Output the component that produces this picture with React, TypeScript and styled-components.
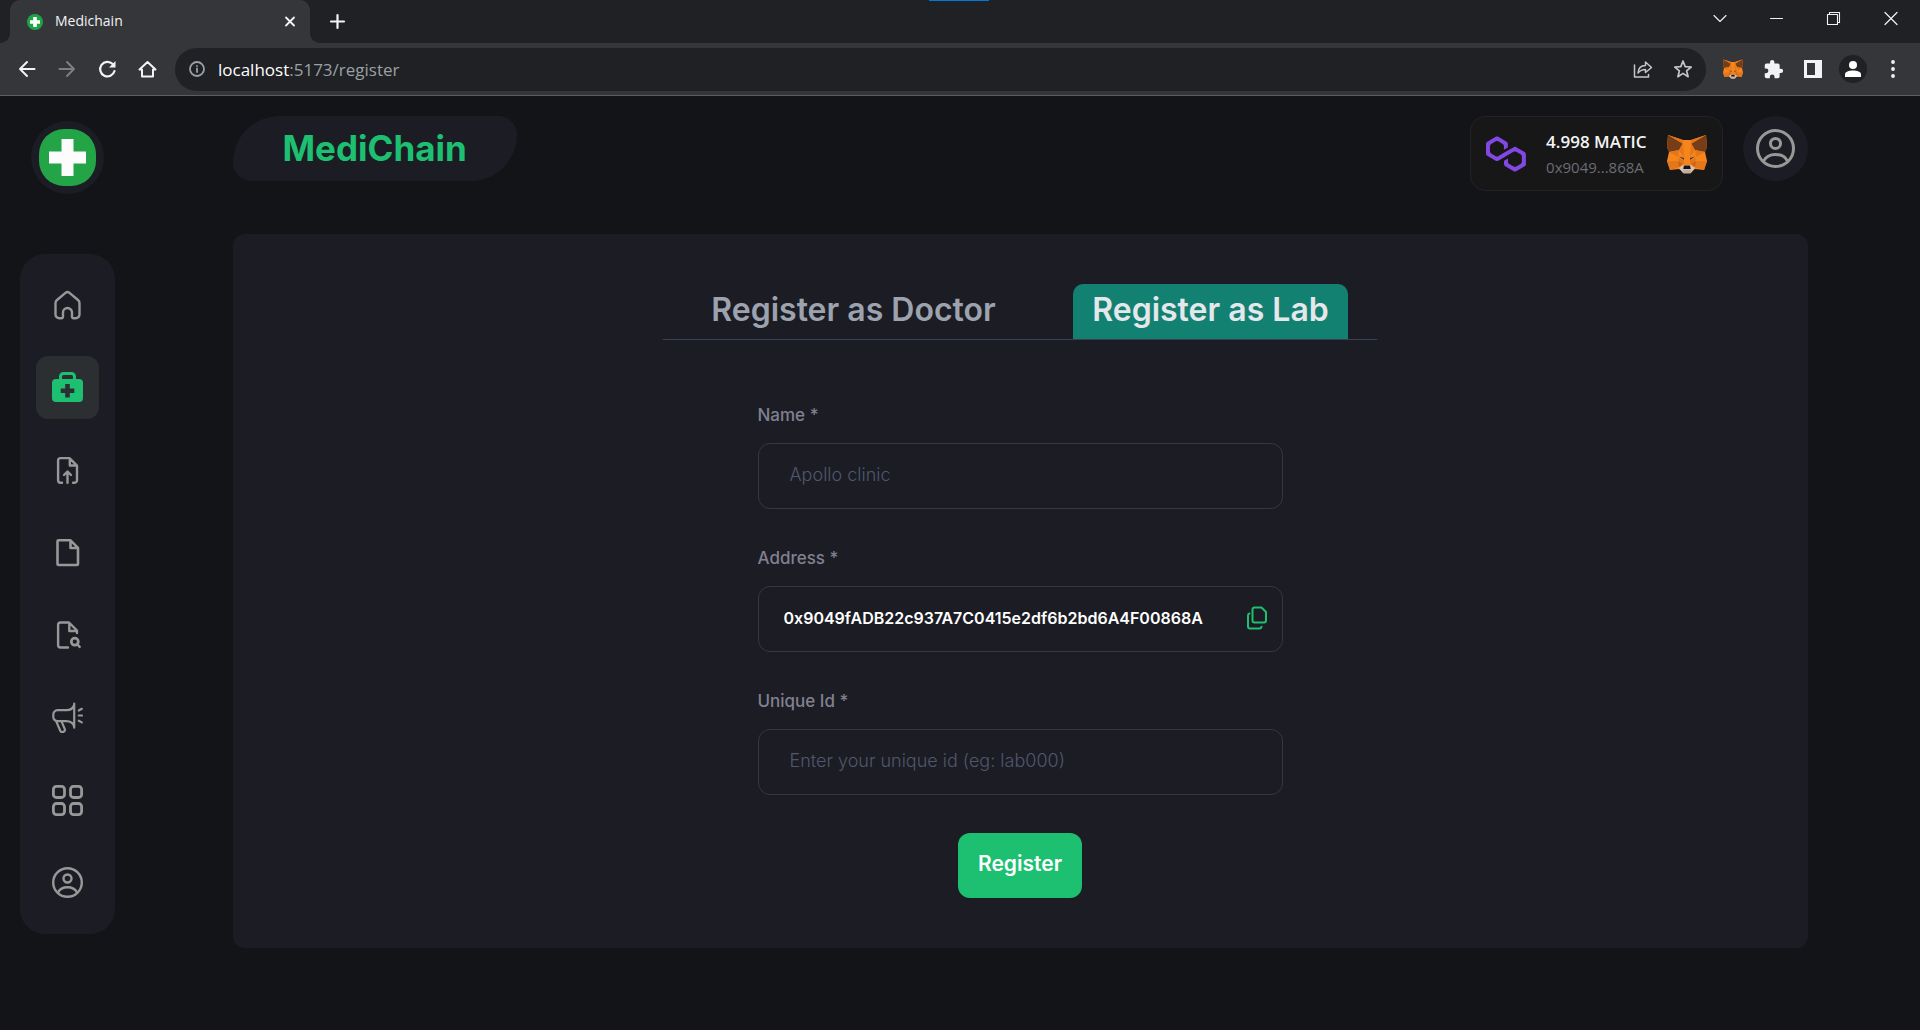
import React, { useState } from "react";
import styled, { createGlobalStyle } from "styled-components";

const UI_FONT = '"Open Sans", "Noto Sans", sans-serif';
const APP_FONT = 'Inter, "Liberation Sans", sans-serif';

const GlobalStyle = createGlobalStyle`
  * { box-sizing: border-box; }
  body {
    margin: 0;
    background: #131418;
    font-family: ${APP_FONT};
  }
  button, input { font: inherit; }
  svg { display: block; flex: none; }
`;

const Window = styled.div`
  min-height: 100vh;
  display: flex;
  flex-direction: column;
`;

/* ---------- browser chrome ---------- */

const TabStrip = styled.div`
  position: relative;
  height: 43px;
  display: flex;
  align-items: stretch;
  padding-left: 10px;
  background: #202124;
  font-family: ${UI_FONT};
`;

const LoadingMark = styled.div`
  position: absolute;
  top: 0;
  left: 929px;
  width: 60px;
  height: 1px;
  background: #0078d7;
`;

const BrowserTab = styled.div`
  position: relative;
  width: 300px;
  display: flex;
  align-items: center;
  gap: 12px;
  padding: 0 12px 0 17px;
  border-radius: 10px 10px 0 0;
  background: #35363a;
  color: #f1f3f4;
  font-size: 14px;

  &::before,
  &::after {
    content: "";
    position: absolute;
    bottom: 0;
    width: 10px;
    height: 10px;
  }
  &::before {
    left: -10px;
    background: radial-gradient(circle at 0 0, #202124 10px, #35363a 10px);
  }
  &::after {
    right: -10px;
    background: radial-gradient(circle at 100% 0, #202124 10px, #35363a 10px);
  }
`;

const TabTitle = styled.span`
  flex: 1;
  padding-bottom: 2px;
`;

const ChromeButton = styled.button<{ $width?: number; $dim?: boolean }>`
  width: ${(p) => p.$width ?? 40}px;
  flex: none;
  display: flex;
  align-items: center;
  justify-content: center;
  padding: 0;
  border: 0;
  background: none;
  color: ${(p) => (p.$dim ? "#7d7e82" : "#f1f3f4")};
`;

const WindowControls = styled.div`
  display: flex;
  margin-left: auto;
  height: 36px;
`;

const Toolbar = styled.div`
  height: 53px;
  display: flex;
  align-items: center;
  padding: 0 7px;
  border-bottom: 1px solid #5c5d62;
  background: #35363a;
  font-family: ${UI_FONT};
`;

const AddressBar = styled.div`
  flex: 1;
  height: 43px;
  display: flex;
  align-items: center;
  margin: 0 7px 0 8px;
  padding: 0 3px 0 14px;
  border-radius: 22px;
  background: #202124;
`;

const Url = styled.div`
  flex: 1;
  padding-left: 13px;
  font-size: 17px;
  color: #9aa0a6;

  b {
    font-weight: 400;
    color: #fff;
  }
`;

const ProfileBadge = styled.span`
  width: 28px;
  height: 28px;
  display: grid;
  place-items: center;
  border-radius: 50%;
  background: #202124;
`;

/* ---------- page ---------- */

const Page = styled.div`
  flex: 1;
  display: flex;
  align-items: flex-start;
  padding: 20px;
`;

const Aside = styled.aside`
  width: 95px;
  flex: none;
  display: flex;
  flex-direction: column;
  align-items: center;
  gap: 60px;
  margin-right: 50px;
  padding-top: 5px;
`;

const LogoLink = styled.a`
  width: 73px;
  height: 73px;
  display: grid;
  place-items: center;
  border-radius: 50%;
  background: #1c1c24;
`;

const Nav = styled.nav`
  width: 100%;
  height: calc(100vh - 350px);
  min-height: 600px;
  display: flex;
  flex-direction: column;
  align-items: center;
  justify-content: space-between;
  padding: 20px 0;
  border-radius: 25px;
  background: #1c1c24;
`;

const NavLink = styled.a<{ $active?: boolean }>`
  width: 63px;
  height: 63px;
  display: grid;
  place-items: center;
  border-radius: 12px;
  background: ${(p) => (p.$active ? "#2c2f32" : "transparent")};
  color: ${(p) => (p.$active ? "#1dc071" : "#989898")};
`;

const Content = styled.div`
  flex: 1;
  max-width: 1600px;
  margin: 0 auto;
  padding-right: 25px;
`;

const Header = styled.header`
  display: flex;
  align-items: flex-start;
  gap: 20px;
  margin-bottom: 43px;
`;

const Brand = styled.h1`
  height: 65px;
  display: flex;
  align-items: center;
  margin: 0 auto 0 0;
  padding: 0 50px 2px;
  border-radius: 50px 20px;
  background: #1c1c24;
  color: #1dc071;
  font-size: 35px;
  font-weight: 700;
`;

const Wallet = styled.div`
  height: 75px;
  display: flex;
  align-items: center;
  gap: 20px;
  padding: 0 15px;
  border: 1px solid #232325;
  border-radius: 15px;
  background: #171717;
  font-family: ${UI_FONT};
`;

const WalletInfo = styled.div`
  display: flex;
  flex-direction: column;
`;

const Balance = styled.span`
  font-size: 17px;
  line-height: 27px;
  font-weight: 600;
  color: #f3f3f3;
`;

const Account = styled.span`
  font-size: 15px;
  line-height: 25px;
  color: #6b6c75;
`;

const Avatar = styled.button`
  width: 65px;
  height: 65px;
  display: grid;
  place-items: center;
  padding: 0;
  border: 0;
  border-radius: 50%;
  background: #1c1c24;
  color: #989898;
`;

const Panel = styled.main`
  display: flex;
  flex-direction: column;
  align-items: center;
  padding: 50px;
  border-radius: 12px;
  background: #1c1c24;
`;

const Tabs = styled.div`
  min-width: 714px;
  display: flex;
  justify-content: space-around;
  border-bottom: 1px solid #374151;
`;

const TabButton = styled.button<{ $active: boolean }>`
  padding: 0 19px 4px;
  border: 0;
  border-radius: 10px 10px 0 0;
  background: ${(p) => (p.$active ? "#128172" : "transparent")};
  color: ${(p) => (p.$active ? "#e5e7eb" : "#9ca3af")};
  font-size: 32px;
  line-height: 51px;
  font-weight: 600;
`;

const Form = styled.form`
  width: 100%;
  max-width: 525px;
  display: flex;
  flex-direction: column;
  gap: 38px;
  margin-top: 64px;
`;

const Field = styled.div`
  display: flex;
  flex-direction: column;
  gap: 17px;
`;

const Label = styled.label`
  font-size: 17px;
  line-height: 22px;
  font-weight: 500;
  color: #808191;
`;

const InputBox = styled.div<{ $inset: number }>`
  height: 66px;
  display: flex;
  align-items: center;
  padding: 0 12px 2px ${(p) => p.$inset}px;
  border: 1px solid #373740;
  border-radius: 12px;
`;

const Input = styled.input`
  flex: 1;
  min-width: 0;
  padding: 0;
  border: 0;
  outline: 0;
  background: none;
  color: #fff;
  font-size: 18px;
  line-height: 26px;

  &:read-only {
    font-size: 16px;
    font-weight: 600;
  }
  &::placeholder {
    color: #4f586c;
    font-weight: 300;
    opacity: 1;
  }
`;

const CopyButton = styled.button`
  display: grid;
  place-items: center;
  padding: 0;
  border: 0;
  background: none;
  color: #1dc071;
`;

const Submit = styled.button`
  align-self: center;
  height: 65px;
  padding: 0 20px 5px;
  border: 0;
  border-radius: 12px;
  background: #1dc071;
  color: #fff;
  font-size: 21px;
  font-weight: 600;
`;

/* ---------- drawings ---------- */

const Line: React.FC<{ size?: number; box?: number; w?: number; children: React.ReactNode }> = ({
  size = 32,
  box = 32,
  w = 2,
  children,
}) => (
  <svg
    width={size}
    height={size}
    viewBox={`0 0 ${box} ${box}`}
    fill="none"
    stroke="currentColor"
    strokeWidth={w}
    strokeLinecap="round"
    strokeLinejoin="round"
    aria-hidden="true"
  >
    {children}
  </svg>
);

const NavGlyph: React.FC<{ size?: number; w?: number; children: React.ReactNode }> = ({
  size = 31,
  w = 2.4,
  children,
}) => (
  <svg
    width={size}
    height={size}
    viewBox="0.5 0.5 31 31"
    fill="none"
    stroke="currentColor"
    strokeWidth={w}
    strokeLinecap="round"
    strokeLinejoin="round"
    aria-hidden="true"
  >
    {children}
  </svg>
);

const HomeIcon = () => (
  <NavGlyph>
    <path d="M4 13.5c0-1.300.5-2.200 1.500-3L14 3.300c1.200-1 2.800-1 4 0l8.500 7.200c1 .8 1.500 1.700 1.500 3V25a3.800 3.800 0 0 1-3.800 3.800H22a1.500 1.500 0 0 1-1.500-1.500V23a4.500 4.500 0 0 0-9 0v4.300a1.500 1.500 0 0 1-1.500 1.500H7.800A3.800 3.800 0 0 1 4 25z" />
  </NavGlyph>
);

const MedKitIcon = () => (
  <NavGlyph w={3}>
    <path d="M9 9V5a3 3 0 0 1 3-3h8a3 3 0 0 1 3 3v4" />
    <rect x=".5" y="7.500" width="31" height="23" rx="4" fill="currentColor" stroke="none" />
    <path d="M16 12.500v13.600M9.200 19.300h13.600" stroke="#2c2f32" strokeWidth="4.600" strokeLinecap="butt" />
  </NavGlyph>
);

const UploadIcon = () => (
  <NavGlyph>
    <path d="M10.500 28.200H9a2.400 2.400 0 0 1-2.400-2.400V6A2.400 2.400 0 0 1 9 3.600h9l7.500 7.500v14.700a2.400 2.400 0 0 1-2.400 2.400h-1.500M18.300 4v7h7M16 28.200V17.500M12.500 20.500L16 17l3.500 3.500" />
  </NavGlyph>
);

const FileIcon = () => (
  <NavGlyph w={2.6}>
    <path d="M7 3.800h12l7.500 7.500V27.500a1 1 0 0 1-1 1H7a1 1 0 0 1-1-1V4.800a1 1 0 0 1 1-1zM19 4.200v7.300h7" />
  </NavGlyph>
);

const FileSearchIcon = () => (
  <NavGlyph>
    <path d="M16.500 28H9a2.400 2.400 0 0 1-2.400-2.400V5.400A2.400 2.400 0 0 1 9 3h8.500l8 8v2.500M17.800 3.500v8h7.500M26 25l2.200 2.400" />
    <circle cx="23.300" cy="22.200" r="3.500" strokeWidth="2.700" />
  </NavGlyph>
);

const MegaphoneIcon = () => (
  <NavGlyph w={2.2}>
    <path d="M22.700 2v24.200M22.700 3c-.8 3.800-3.400 5.700-8 5.700H6A4.200 4.200 0 0 0 1.800 13v2.400A4.200 4.200 0 0 0 6 19.600h8.700c4.600 0 7.200 1.900 8 5.700M4.600 19.600l4.200 9.700a2.400 2.400 0 0 0 4.400-1.900l-3.300-7.800M27.300 9l3-1.700M27.300 14h3.200M27.300 19.200l3 1.700" />
  </NavGlyph>
);

const GridIcon = () => (
  <NavGlyph w={2.8}>
    {[1.9, 19].map((y) =>
      [1.9, 19].map((x) => <rect key={`${x}-${y}`} x={x} y={y} width="11.1" height="11.1" rx="3" />)
    )}
  </NavGlyph>
);

const UserIcon: React.FC<{ size?: number }> = ({ size }) => (
  <NavGlyph size={size}>
    <circle cx="16" cy="16" r="14.300" />
    <circle cx="16" cy="12" r="4" />
    <path d="M6.500 26c1.800-3.700 5.300-5.300 9.500-5.300s7.700 1.600 9.500 5.300" />
  </NavGlyph>
);

const LogoIcon = () => (
  <svg width="57" height="57" viewBox="0 0 57 57" aria-hidden="true">
    <rect width="57" height="57" rx="25" fill="#22a447" />
    <path d="M28.500 10v37M10 28.500h37" stroke="#fcfcfc" strokeWidth="12" />
  </svg>
);

const PolygonIcon = () => (
  <svg width="40" height="36" viewBox="0 0 38.4 33.5" fill="#8247e5" aria-hidden="true">
    <path d="M29 10.2c-.7-.4-1.6-.4-2.4 0L21 13.5l-3.800 2.100-5.500 3.300c-.7.4-1.600.4-2.400 0L5 16.300c-.7-.4-1.200-1.200-1.200-2.100v-5c0-.8.4-1.600 1.200-2.100l4.300-2.500c.7-.4 1.600-.4 2.400 0L16 7.200c.7.4 1.200 1.200 1.200 2.100v3.300l3.800-2.200V7c0-.8-.4-1.600-1.200-2.100l-8-4.700c-.7-.4-1.600-.4-2.400 0L1.200 5C.4 5.400 0 6.200 0 7v9.400c0 .8.4 1.600 1.200 2.100l8.100 4.700c.7.4 1.600.4 2.400 0l5.500-3.200 3.800-2.200 5.500-3.200c.7-.4 1.600-.4 2.400 0l4.300 2.500c.7.4 1.200 1.200 1.200 2.100v5c0 .8-.4 1.600-1.200 2.100L29 28.800c-.7.4-1.600.4-2.400 0l-4.300-2.500c-.7-.4-1.200-1.200-1.200-2.100V21l-3.800 2.200v3.300c0 .8.4 1.600 1.200 2.100l8.100 4.700c.7.4 1.600.4 2.400 0l8.100-4.700c.7-.4 1.200-1.200 1.200-2.100V17c0-.8-.4-1.600-1.200-2.100z" />
  </svg>
);

const FoxIcon: React.FC<{ size?: number }> = ({ size = 40 }) => (
  <svg width={size} height={size} viewBox="0 0 40 40" aria-hidden="true">
    <path d="M1 1l15 5h8l15-5 1 12-2 5 2 9-3 9-9-1-4 3h-8l-4-3-9 1-3-9 2-9-2-5z" fill="#f6851b" />
    <path d="M1 1l15 8-4 7-10 2-2-5zM39 1L24 9l4 7 10 2 2-5z" fill="#763d16" />
    <path d="M1 1l15 5v4zM39 1l-15 5v4z" fill="#e2761b" />
    <path d="M12 16l4-7 1 14zM28 16l-4-7-1 14z" fill="#e4761b" />
    <path d="M2 18l10-2-1 7zM38 18l-10-2 1 7zM11 24l6 2v4l-5-2zM29 24l-6 2v4l5-2z" fill="#e2761b" />
    <path d="M0 27h11l1 6-9 3zM40 27H29l-1 6 9 3z" fill="#e4761b" />
    <path d="M11 27l5 3-4 3zM29 27l-5 3 4 3z" fill="#cd6116" />
    <path d="M12 22.500l5 1.500v1.800zM28 22.500l-5 1.500v1.800z" fill="#233447" />
    <path d="M12 34l4-3h8l4 3-4 5h-8z" fill="#d7c1b3" />
    <path d="M17 31.500h6l.8 3.500h-7.600z" fill="#161616" />
    <path d="M16 36h8l-.5 3.500h-7z" fill="#c0ad9e" />
  </svg>
);

const CopyIcon = () => (
  <Line size={26} box={26} w={2}>
    <path d="M10.500 2.500h7L22 7v8.500a2 2 0 0 1-2 2h-9.500a2 2 0 0 1-2-2v-11a2 2 0 0 1 2-2zM5.500 8.500a2 2 0 0 0-1.500 2v11a2 2 0 0 0 2 2h9.500a2 2 0 0 0 2-1.800" />
  </Line>
);

const Favicon = () => (
  <svg width="16" height="16" viewBox="0 0 16 16" aria-hidden="true">
    <circle cx="8" cy="8" r="8" fill="#1fa347" />
    <path d="M8 3v10M3 8h10" stroke="#fff" strokeWidth="3.600" />
  </svg>
);

const NAV_ITEMS = [
  { name: "Home", Icon: HomeIcon },
  { name: "Register", Icon: MedKitIcon, active: true },
  { name: "Upload", Icon: UploadIcon },
  { name: "Files", Icon: FileIcon },
  { name: "Search files", Icon: FileSearchIcon },
  { name: "Campaign", Icon: MegaphoneIcon },
  { name: "Dashboard", Icon: GridIcon },
  { name: "Profile", Icon: UserIcon },
];

const BrowserChrome = () => (
  <>
    <TabStrip>
      <LoadingMark />
      <BrowserTab>
        <Favicon />
        <TabTitle>Medichain</TabTitle>
        <ChromeButton $width={16} aria-label="Close tab">
          <Line size={16} box={16} w={1.8}><path d="M4 3.500l8 8M12 3.500l-8 8" /></Line>
        </ChromeButton>
      </BrowserTab>
      <ChromeButton $width={54} aria-label="New tab">
        <Line size={18} box={18} w={2.2}><path d="M9.500 2v13M3 8.500h13" /></Line>
      </ChromeButton>
      <WindowControls>
        <ChromeButton $width={57} aria-label="Search tabs">
          <Line size={16} box={16} w={1.1}><path d="M2 5.500l6 6 6-6" /></Line>
        </ChromeButton>
        <ChromeButton $width={57} aria-label="Minimize">
          <Line size={16} box={16} w={1}><path d="M1.500 8.500h12" /></Line>
        </ChromeButton>
        <ChromeButton $width={57} aria-label="Restore">
          <Line size={16} box={16} w={1.1}>
            <path d="M1.500 4.500h10v10h-10zM3.500 4V2.500h10v10H12" />
          </Line>
        </ChromeButton>
        <ChromeButton $width={58} aria-label="Close">
          <Line size={16} box={16} w={1.2}><path d="M2 2.500l12 12M14 2.500l-12 12" /></Line>
        </ChromeButton>
      </WindowControls>
    </TabStrip>
    <Toolbar>
      <ChromeButton aria-label="Back">
        <Line size={20} box={20} w={2}><path d="M17.500 10H3M10 3l-7 7 7 7" /></Line>
      </ChromeButton>
      <ChromeButton $dim aria-label="Forward">
        <Line size={20} box={20} w={2}><path d="M2.500 10H17M10 3l7 7-7 7" /></Line>
      </ChromeButton>
      <ChromeButton aria-label="Reload">
        <Line size={20} box={20} w={2.2}>
          <path d="M17.500 12a7.300 7.300 0 1 1-1.800-7" />
          <path d="M18.500 2v6.500h-6.500z" fill="currentColor" stroke="none" />
        </Line>
      </ChromeButton>
      <ChromeButton aria-label="Home page">
        <Line size={20} box={20} w={2}><path d="M2.500 10.500L10.500 3l8 7.500h-2.500V17.500H5v-7z" /></Line>
      </ChromeButton>
      <AddressBar>
        <Line size={16} box={16} w={1.8}>
          <g stroke="#9aa0a6"><circle cx="8" cy="8" r="7" /><path d="M8 7.500v3.500M8 5v.1" /></g>
        </Line>
        <Url><b>localhost</b>:5173/register</Url>
        <ChromeButton aria-label="Share">
          <Line size={20} box={20} w={1.5}>
            <path d="M1.500 6v12h14v-2.500M5 14c.3-4.800 3-7.500 7.500-7.500V3l6 5.500-6 5V10.500C9 10.500 7 11.500 5 14z" stroke="#c4c7c9" />
          </Line>
        </ChromeButton>
        <ChromeButton aria-label="Bookmark">
          <Line size={20} box={20} w={1.7}>
            <path d="M10 2l2.200 5.600 6 .4-4.600 3.800L15.100 17.700 10 14.400l-5.100 3.300 1.500-5.900L1.800 8l6-.4z" stroke="#c4c7c9" />
          </Line>
        </ChromeButton>
      </AddressBar>
      <ChromeButton aria-label="MetaMask"><FoxIcon size={20} /></ChromeButton>
      <ChromeButton aria-label="Extensions">
        <svg width="21" height="21" viewBox="0 0 24 24" fill="currentColor" aria-hidden="true">
          <path d="M20.500 11H19V7a2 2 0 0 0-2-2h-4V3.500a2.500 2.500 0 0 0-5 0V5H4a2 2 0 0 0-2 2v3.800h1.500a2.700 2.700 0 0 1 0 5.400H2V20a2 2 0 0 0 2 2h3.800v-1.500a2.700 2.700 0 0 1 5.400 0V22H17a2 2 0 0 0 2-2v-4h1.500a2.500 2.500 0 0 0 0-5z" />
        </svg>
      </ChromeButton>
      <ChromeButton aria-label="Side panel">
        <svg width="18" height="18" viewBox="0 0 18 18" aria-hidden="true">
          <rect width="18" height="18" fill="#f1f3f4" />
          <rect x="3" y="3" width="8" height="12" fill="#35363a" />
        </svg>
      </ChromeButton>
      <ChromeButton aria-label="Browser profile">
        <ProfileBadge>
          <svg width="16" height="16" viewBox="0 0 16 16" fill="#fff" aria-hidden="true">
            <circle cx="8" cy="4" r="4" />
            <path d="M0 16v-2.500c0-3 4-4 8-4s8 1 8 4V16z" />
          </svg>
        </ProfileBadge>
      </ChromeButton>
      <ChromeButton aria-label="Menu">
        <svg width="4" height="18" viewBox="0 0 4 18" fill="currentColor" aria-hidden="true">
          {[2, 9, 16].map((y) => <circle key={y} cx="2" cy={y} r="1.9" />)}
        </svg>
      </ChromeButton>
    </Toolbar>
  </>
);

const ADDRESS = "0x9049fADB22c937A7C0415e2df6b2bd6A4F00868A";

export default function App() {
  const [tab, setTab] = useState("Lab");

  return (
    <Window>
      <GlobalStyle />
      <BrowserChrome />
      <Page>
        <Aside>
          <LogoLink href="#" aria-label="Medichain home"><LogoIcon /></LogoLink>
          <Nav>
            {NAV_ITEMS.map(({ name, Icon, active }) => (
              <NavLink key={name} href="#" aria-label={name} $active={active}>
                <Icon />
              </NavLink>
            ))}
          </Nav>
        </Aside>
        <Content>
          <Header>
            <Brand>MediChain</Brand>
            <Wallet>
              <PolygonIcon />
              <WalletInfo>
                <Balance>4.998 MATIC</Balance>
                <Account>0x9049...868A</Account>
              </WalletInfo>
              <FoxIcon />
            </Wallet>
            <Avatar aria-label="Account"><UserIcon size={39} /></Avatar>
          </Header>
          <Panel>
            <Tabs>
              {["Doctor", "Lab"].map((role) => (
                <TabButton key={role} $active={tab === role} onClick={() => setTab(role)}>
                  Register as {role}
                </TabButton>
              ))}
            </Tabs>
            <Form onSubmit={(e) => e.preventDefault()}>
              <Field>
                <Label htmlFor="name">Name *</Label>
                <InputBox $inset={31}>
                  <Input id="name" placeholder="Apollo clinic" />
                </InputBox>
              </Field>
              <Field>
                <Label htmlFor="address">Address *</Label>
                <InputBox $inset={25}>
                  <Input id="address" value={ADDRESS} readOnly />
                  <CopyButton type="button" aria-label="Copy address"><CopyIcon /></CopyButton>
                </InputBox>
              </Field>
              <Field>
                <Label htmlFor="uid">Unique Id *</Label>
                <InputBox $inset={31}>
                  <Input id="uid" placeholder="Enter your unique id (eg: lab000)" />
                </InputBox>
              </Field>
              <Submit type="submit">Register</Submit>
            </Form>
          </Panel>
        </Content>
      </Page>
    </Window>
  );
}
